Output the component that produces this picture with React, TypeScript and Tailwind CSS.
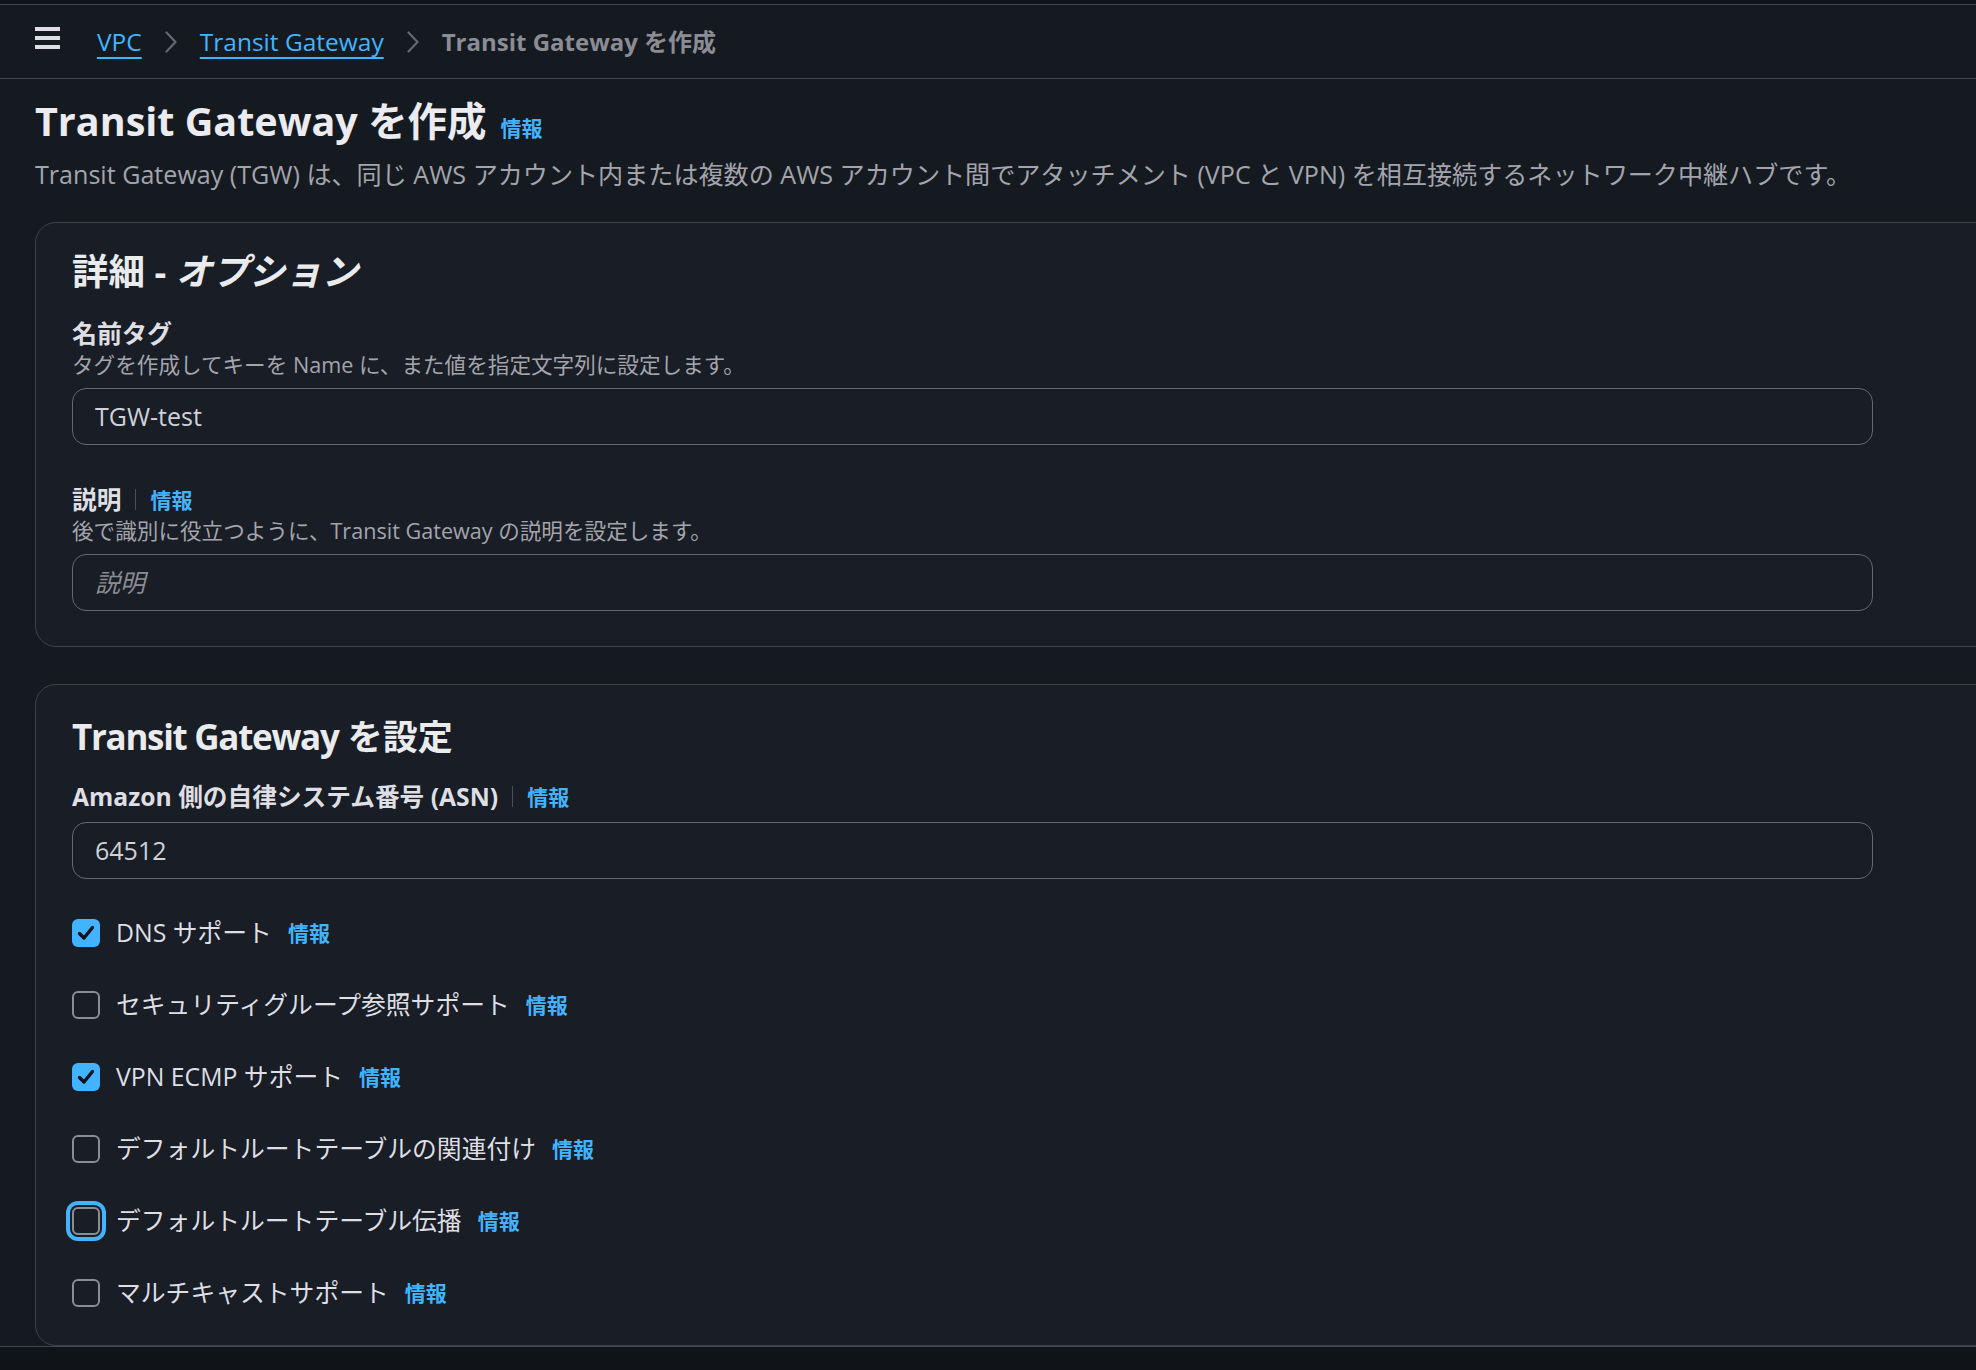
import React from "react";

const FONT = "font-['Open_Sans','Noto_Sans_CJK_JP',sans-serif]";

function Chevron() {
  return (
    <svg width="12" height="22" viewBox="0 0 12 22" className="shrink-0">
      <path d="M1.5 1.5 L10.5 11 L1.5 20.5" fill="none" stroke="#656871" strokeWidth="2.2" strokeLinecap="round" strokeLinejoin="round" />
    </svg>
  );
}

function Hamburger() {
  return (
    <svg width="25" height="22" viewBox="0 0 25 22" className="shrink-0 mb-[8px]">
      <rect x="0" y="0" width="25" height="4" fill="#dedee3" />
      <rect x="0" y="9" width="25" height="4" fill="#dedee3" />
      <rect x="0" y="18" width="25" height="4" fill="#dedee3" />
    </svg>
  );
}

function Info() {
  return <span className="text-[21px] font-bold text-[#42b4ff] leading-[28px]">情報</span>;
}

function LabelWithInfo({ children }: { children: React.ReactNode }) {
  return (
    <div className="flex items-center h-[35px]">
      <span className="text-[24.7px] font-bold leading-[35px] text-[#dedee3]">{children}</span>
      <span className="w-px h-[21px] bg-[#4a4f59] mx-[14px]" />
      <Info />
    </div>
  );
}

function TextInput({ value, placeholder }: { value?: string; placeholder?: string }) {
  return (
    <div className="w-[1801px] h-[57px] rounded-[14px] border border-[#656871] flex items-center pl-[22px] text-[25px]">
      {value ? (
        <span className="text-[#d1d1d8]">{value}</span>
      ) : (
        <span className="text-[#8c8c94] italic">{placeholder}</span>
      )}
    </div>
  );
}

function CheckRow({ label, checked, focused }: { label: string; checked?: boolean; focused?: boolean }) {
  return (
    <div className="flex items-center h-[35px]">
      {checked ? (
        <div className="w-[28px] h-[28px] rounded-[6px] bg-[#42b4ff] flex items-center justify-center shrink-0">
          <svg width="28" height="28" viewBox="0 0 28 28">
            <path d="M7.5 14.5 L12 19 L20.5 8.5" fill="none" stroke="#0f141a" strokeWidth="3.4" strokeLinecap="round" strokeLinejoin="round" />
          </svg>
        </div>
      ) : (
        <div
          className={
            focused
              ? "w-[28px] h-[28px] rounded-[6px] border-2 border-[#8c8c94] shrink-0 shadow-[0_0_0_2px_#181d26,0_0_0_6px_#42b4ff]"
              : "w-[28px] h-[28px] rounded-[6px] border-2 border-[#8c8c94] shrink-0"
          }
        />
      )}
      <span className="ml-[16px] text-[24.8px] leading-[35px] text-[#dedee3]">{label}</span>
      <span className="ml-[16px] flex items-center">
        <Info />
      </span>
    </div>
  );
}

export default function App() {
  return (
    <div className={`w-[1976px] h-[1370px] overflow-hidden flex flex-col bg-[#151a21] ${FONT}`}>
      <div className="h-[5px] shrink-0 bg-[#0f141a] border-b border-[#424650]" />
      <header className="h-[74px] shrink-0 border-b border-[#424650] flex items-center pl-[35px]">
        <Hamburger />
        <nav className="flex items-center ml-[37px] gap-[23px] text-[24.5px] leading-[35px]">
          <span className="text-[#42b4ff] underline decoration-2 underline-offset-[6px]">VPC</span>
          <Chevron />
          <span className="text-[#42b4ff] underline decoration-2 underline-offset-[6px]">Transit Gateway</span>
          <Chevron />
          <span className="text-[#8c8c94] font-bold text-[24px]">Transit Gateway を作成</span>
        </nav>
      </header>

      <main className="flex-1 overflow-hidden pl-[35px] pt-[16px]">
        <div className="flex items-baseline gap-[14px]">
          <h1 className="text-[39.5px] leading-[52px] font-bold text-[#ebebf0]">Transit Gateway を作成</h1>
          <Info />
        </div>
        <p className="mt-[10px] text-[25.1px] leading-[35px] text-[#a4a4ad] whitespace-nowrap">
          Transit Gateway (TGW) は、同じ AWS アカウント内または複数の AWS アカウント間でアタッチメント (VPC と VPN) を相互接続するネットワーク中継ハブです。
        </p>

        <section className="mt-[30px] w-[1990px] rounded-[21px] border border-[#3d434c] bg-[#181d26] pl-[36px] pt-[27px] pb-[35px]">
          <h2 className="text-[36.5px] leading-[42px] font-bold text-[#e9ebed]">
            詳細 - <i>オプション</i>
          </h2>
          <div className="mt-[24px] text-[25px] leading-[35px] font-bold text-[#dedee3]">名前タグ</div>
          <div className="text-[21.6px] leading-[28px] text-[#a4a4ad]">
            タグを作成してキーを Name に、また値を指定文字列に設定します。
          </div>
          <div className="mt-[9px]">
            <TextInput value="TGW-test" />
          </div>
          <div className="mt-[37px]">
            <LabelWithInfo>説明</LabelWithInfo>
          </div>
          <div className="text-[21.6px] leading-[28px] text-[#a4a4ad]">
            後で識別に役立つように、Transit Gateway の説明を設定します。
          </div>
          <div className="mt-[9px]">
            <TextInput placeholder="説明" />
          </div>
        </section>

        <section className="mt-[37px] w-[1990px] rounded-[21px] border border-[#3d434c] bg-[#181d26] pl-[36px] pt-[31px] pb-[35px]">
          <h2 className="text-[35px] leading-[42px] font-bold text-[#e9ebed]">
            <span className="tracking-[-1.3px]">Transit Gateway</span> を設定
          </h2>
          <div className="mt-[21px]">
            <LabelWithInfo>Amazon 側の自律システム番号 (ASN)</LabelWithInfo>
          </div>
          <div className="mt-[8px]">
            <TextInput value="64512" />
          </div>
          <div className="mt-[36px] flex flex-col gap-[37px]">
            <CheckRow label="DNS サポート" checked />
            <CheckRow label="セキュリティグループ参照サポート" />
            <CheckRow label="VPN ECMP サポート" checked />
            <CheckRow label="デフォルトルートテーブルの関連付け" />
            <CheckRow label="デフォルトルートテーブル伝播" focused />
            <CheckRow label="マルチキャストサポート" />
          </div>
        </section>
      </main>

      <div className="h-[24px] shrink-0 border-t border-[#424650] bg-[#101418]" />
    </div>
  );
}
